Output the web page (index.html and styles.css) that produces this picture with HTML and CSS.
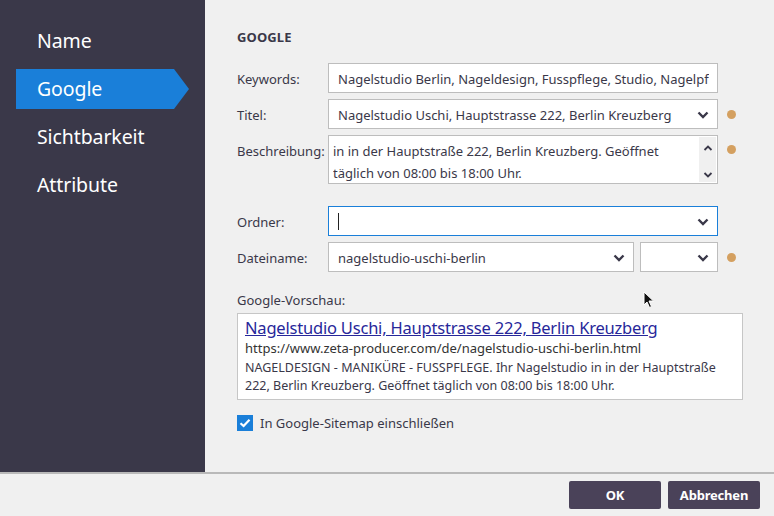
FILE: index.html
```html
<!DOCTYPE html>
<html lang="de">
<head>
<meta charset="utf-8">
<link rel="stylesheet" href="styles.css">
</head>
<body>
<div class="dialog">
  <div class="top">
    <nav class="sidebar">
      <div class="nav-item">Name</div>
      <div class="nav-item active">Google</div>
      <div class="nav-item">Sichtbarkeit</div>
      <div class="nav-item">Attribute</div>
    </nav>
    <main class="content">
      <h2 class="heading">GOOGLE</h2>
      <div class="form">
        <label class="lbl">Keywords:</label>
        <div class="field"><span class="val clip">Nagelstudio Berlin, Nageldesign, Fusspflege, Studio, Nagelpflege</span></div>
        <span></span>

        <label class="lbl">Titel:</label>
        <div class="field"><span class="val">Nagelstudio Uschi, Hauptstrasse 222, Berlin Kreuzberg</span><svg class="chev" viewBox="0 0 12 8"><path d="M1.5 1.5 6 6 10.5 1.5" /></svg></div>
        <span class="dot"></span>

        <label class="lbl lbl-top">Beschreibung:</label>
        <div class="field area"><span class="val multi">in in der Hauptstraße 222, Berlin Kreuzberg. Geöffnet<br>täglich von 08:00 bis 18:00 Uhr.</span>
          <div class="scroll"><svg class="sarrow" viewBox="0 0 10 6"><path d="M1.5 5 5 1.5 8.5 5"/></svg><svg class="sarrow" viewBox="0 0 10 6"><path d="M1.5 1 5 4.5 8.5 1"/></svg></div>
        </div>
        <span class="dot dot-top"></span>

        <label class="lbl gap">Ordner:</label>
        <div class="field focus gap"><span class="caret"></span><svg class="chev" viewBox="0 0 12 8"><path d="M1.5 1.5 6 6 10.5 1.5" /></svg></div>
        <span class="gap"></span>

        <label class="lbl">Dateiname:</label>
        <div class="split">
          <div class="field"><span class="val">nagelstudio-uschi-berlin</span><svg class="chev" viewBox="0 0 12 8"><path d="M1.5 1.5 6 6 10.5 1.5" /></svg></div>
          <div class="field small"><svg class="chev" viewBox="0 0 12 8"><path d="M1.5 1.5 6 6 10.5 1.5" /></svg></div>
        </div>
        <span class="dot"></span>
      </div>

      <div class="preview-label">Google-Vorschau:</div>
      <div class="preview">
        <a class="p-title">Nagelstudio Uschi, Hauptstrasse 222, Berlin Kreuzberg</a>
        <div class="p-url">https://www.zeta-producer.com/de/nagelstudio-uschi-berlin.html</div>
        <div class="p-desc">NAGELDESIGN - MANIKÜRE - FUSSPFLEGE. Ihr Nagelstudio in in der Hauptstraße 222, Berlin Kreuzberg. Geöffnet täglich von 08:00 bis 18:00 Uhr.</div>
      </div>

      <div class="check-row">
        <span class="checkbox"><svg viewBox="0 0 16 16"><path d="M3.5 8.2 6.6 11 12.5 4.8"/></svg></span>
        <span>In Google-Sitemap einschließen</span>
      </div>
    </main>
  </div>
  <footer class="footer">
    <button class="btn">OK</button>
    <button class="btn">Abbrechen</button>
  </footer>
</div>
<svg class="cursor" viewBox="0 0 12 18"><path d="M1 1 L1 14 L4 11 L6.5 16.5 L8.5 15.5 L6 10 L10.5 10 Z" fill="#111" stroke="#fff" stroke-width="1"/></svg>
</body>
</html>
```
FILE: styles.css
```css
* { box-sizing: border-box; }
html, body { margin: 0; padding: 0; }
body {
  width: 774px;
  height: 516px;
  background: #f0f0f0;
  font-family: "Noto Sans", "Open Sans", sans-serif;
  color: #3a3849;
  position: relative;
  overflow: hidden;
}
.dialog { display: flex; flex-direction: column; height: 516px; }
.top { display: flex; height: 472px; }
.sidebar {
  width: 205px;
  background: #3a3849;
  padding-top: 21px;
  display: flex;
  flex-direction: column;
  gap: 8px;
}
.nav-item {
  height: 40px;
  line-height: 40px;
  padding-left: 21px;
  margin-left: 16px;
  width: 173px;
  color: #ffffff;
  font-size: 19.5px;
  letter-spacing: -0.1px;
}
.nav-item.active {
  background: #1a7fd9;
  clip-path: polygon(0 0, 158px 0, 173px 50%, 158px 100%, 0 100%);
}
.content {
  flex: 1;
  padding: 27px 0 0 32px;
}
.heading {
  margin: 0;
  font-size: 13px;
  font-weight: 700;
  line-height: 20px;
  color: #3a3849;
  letter-spacing: 0.1px;
}
.form {
  margin-top: 16px;
  display: grid;
  grid-template-columns: 91px 390px 24px;
  row-gap: 6px;
  align-items: center;
}
.lbl {
  font-size: 13px;
  color: #3a3849;
  padding-top: 1px;
}
.lbl-top { align-self: start; padding-top: 7px; }
.gap { margin-top: 16px; }
.field {
  height: 30px;
  background: #fff;
  border: 1px solid #bdbdbd;
  display: flex;
  align-items: center;
  padding: 1px 8px 0 9px;
  font-size: 13px;
  color: #3a3849;
  overflow: hidden;
  white-space: nowrap;
}
.val { flex: 1; overflow: hidden; }
.clip { text-overflow: clip; }
.chev { width: 12px; height: 8px; flex: none; }
.chev path, .sarrow path {
  fill: none;
  stroke: #3a3849;
  stroke-width: 2.4;
  stroke-linecap: butt;
}
.field.area {
  height: 49px;
  align-items: stretch;
  padding: 0 1px 0 4px;
}
.multi { line-height: 22px; padding-top: 4px; white-space: nowrap; }
.scroll {
  width: 17px;
  margin: 1px 0;
  background: #f0f0f0;
  display: flex;
  flex-direction: column;
  justify-content: space-between;
  align-items: center;
  padding: 8px 0 4px;
}
.sarrow { width: 10px; height: 6px; }
.sarrow path { stroke-width: 1.8; }
.focus { border-color: #1a7fd9; }
.caret {
  flex: 1;
  height: 17px;
  border-left: 1px solid #222;
  margin-left: 0;
}
.split { display: flex; gap: 6px; }
.split .field { flex: 1; }
.split .field.small { flex: none; width: 78px; justify-content: flex-end; }
.dot {
  width: 9px;
  height: 9px;
  border-radius: 50%;
  background: #d4a060;
  justify-self: center;
  margin-left: 2px;
}
.dot-top { align-self: start; margin-top: 10px; }
.preview-label {
  margin-top: 19px;
  font-size: 13px;
  line-height: 18px;
}
.preview {
  margin-top: 4px;
  width: 506px;
  height: 87px;
  background: #fff;
  border: 1px solid #c6c6c6;
  padding: 3px 8px 0 7px;
}
.p-title {
  display: block;
  font-size: 16.5px;
  line-height: 22px;
  color: #27279a;
  text-decoration: underline;
  letter-spacing: -0.2px;
  white-space: nowrap;
}
.p-url {
  font-size: 13px;
  line-height: 19px;
  color: #333;
  white-space: nowrap;
}
.p-desc {
  font-size: 12.5px;
  line-height: 18px;
  color: #3a3849;
  margin-top: 1px;
}
.check-row {
  margin-top: 14px;
  display: flex;
  align-items: center;
  gap: 7px;
  font-size: 13px;
  color: #3a3849;
}
.checkbox {
  width: 16px;
  height: 16px;
  background: #1a7fd9;
  display: inline-flex;
}
.checkbox svg { width: 16px; height: 16px; }
.checkbox path { fill: none; stroke: #fff; stroke-width: 2.2; }
.footer {
  height: 44px;
  border-top: 2px solid #b9b9b9;
  display: flex;
  justify-content: flex-end;
  align-items: center;
  gap: 7px;
  padding-right: 14px;
  padding-top: 0;
}
.btn {
  width: 92px;
  height: 28px;
  border: none;
  border-radius: 2px;
  background: #4a4259;
  color: #fff;
  font-family: "Noto Sans", "Open Sans", sans-serif;
  font-weight: 700;
  font-size: 13px;
  letter-spacing: -0.2px;
}
.cursor {
  position: absolute;
  left: 643px;
  top: 291px;
  width: 12px;
  height: 18px;
}
```
